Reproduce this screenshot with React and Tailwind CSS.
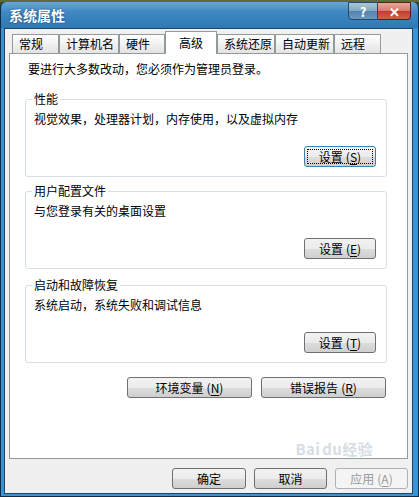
import React from "react";

const FONT = { fontFamily: '"Noto Sans CJK SC", "Noto Sans", sans-serif' };

function Btn({ children, w, focused, disabled, className = "" }) {
  return (
    <div
      className={
        "relative flex h-[21px] items-center justify-center rounded-[3px] border text-[12px] leading-none " +
        (focused
          ? "border-[#3c7fb1] bg-[linear-gradient(to_bottom,#f2f2f2_0%,#ebebeb_50%,#dddddd_51%,#cfcfcf_100%)] text-black "
          : disabled
          ? "border-[#adb2b5] bg-[#f4f4f4] text-[#9a9a9a] "
          : "border-[#707070] bg-[linear-gradient(to_bottom,#f2f2f2_0%,#ebebeb_50%,#dddddd_51%,#cfcfcf_100%)] text-black ") +
        className
      }
      style={{ width: w }}
    >
      {focused && (
        <div className="pointer-events-none absolute inset-[2px] border border-dotted border-black" />
      )}
      <span className="relative">{children}</span>
    </div>
  );
}

function Mn({ label, k }) {
  return (
    <>
      {label}
      <span className="ml-[3px]">
        (<span className="underline underline-offset-2">{k}</span>)
      </span>
    </>
  );
}

function Group({ title, text, btn, className = "" }) {
  return (
    <div
      className={
        "relative flex h-[78px] flex-col rounded-[3px] border border-[#d5dfe5] pb-[9px] " + className
      }
    >
      <div className="absolute left-[6px] top-[-9px] bg-white px-[2px] text-[12px] leading-[16px] text-black">
        {title}
      </div>
      <div className="pl-[8px] pt-[11px] text-[12px] leading-[16px] text-black">{text}</div>
      <div className="mt-auto flex justify-end pr-[10px]">{btn}</div>
    </div>
  );
}

const tabs = [
  { t: "常规", w: 47 },
  { t: "计算机名", w: 60 },
  { t: "硬件", w: 46 },
  { t: "高级", w: 52, sel: true },
  { t: "系统还原", w: 58 },
  { t: "自动更新", w: 59 },
  { t: "远程", w: 47 },
];

export default function App() {
  return (
    <div className="flex h-[497px] w-[419px] flex-col bg-[#3a4a2c]" style={FONT}>
      <div className="h-[2px] w-full bg-[#5b6b3a]" />
      <div className="flex flex-1 flex-col rounded-t-[6px] border-x border-b border-[#0f2c47] bg-[linear-gradient(to_bottom,#68a7d8_0px,#3f88c2_10px,#2e78b4_26px,#3c93d3_27px,#3c93d3_100%)] pb-[2px] pl-[3px] pr-[5px]">
        {/* Title bar */}
        <div className="relative flex h-[26px] items-center">
          <div className="pl-[5px] text-[14px] font-bold leading-none text-white [text-shadow:0_0_2px_rgba(0,30,60,0.6)]">
            系统属性
          </div>
          <div className="absolute right-[2px] top-0 flex">
            <div className="flex h-[18px] w-[30px] items-center justify-center rounded-bl-[4px] border border-[#23486a] bg-[linear-gradient(to_bottom,#a9c7de_0%,#7ea7c7_50%,#5583ab_51%,#6a98bf_100%)] text-[13px] font-bold leading-none text-white">
              ?
            </div>
            <div className="flex h-[18px] w-[33px] items-center justify-center rounded-br-[4px] border border-l-0 border-[#5a1e16] bg-[linear-gradient(to_bottom,#e8a99a_0%,#d6786a_50%,#bf3e2c_51%,#d0604c_100%)] text-[13px] font-bold leading-none text-white">
              ✕
            </div>
          </div>
        </div>

        {/* Body */}
        <div className="flex flex-1 flex-col border border-[#1e4466] bg-[#f0f0f0] px-[4px] pt-[2px]">
          {/* Tabs */}
          <div className="relative z-10 -mb-px ml-[3px] flex h-[23px] items-end">
            {tabs.map((tab) =>
              tab.sel ? (
                <div
                  key={tab.t}
                  className="flex h-[23px] items-start justify-center border border-b-0 border-[#919b9c] bg-white pt-[3px] text-[12px] leading-[16px] text-black"
                  style={{ width: tab.w }}
                >
                  {tab.t}
                </div>
              ) : (
                <div
                  key={tab.t}
                  className="mb-px flex h-[19px] items-center border border-b-0 border-[#919b9c] bg-[linear-gradient(to_bottom,#ffffff_0%,#f3f3f3_45%,#e3e3e3_100%)] pl-[6px] text-[12px] leading-[16px] text-black"
                  style={{ width: tab.w }}
                >
                  {tab.t}
                </div>
              )
            )}
          </div>

          {/* Panel */}
          <div className="relative flex h-[406px] flex-col border border-[#919b9c] bg-white pl-[15px] pr-[20px]">
            <div className="pl-[3px] pt-[7px] text-[12px] leading-[16px] text-black">
              要进行大多数改动，您必须作为管理员登录。
            </div>
            <Group
              className="mt-[22px]"
              title="性能"
              text="视觉效果，处理器计划，内存使用，以及虚拟内存"
              btn={
                <Btn w={72} focused>
                  <Mn label="设置" k="S" />
                </Btn>
              }
            />
            <Group
              className="mt-[14px]"
              title="用户配置文件"
              text="与您登录有关的桌面设置"
              btn={
                <Btn w={72}>
                  <Mn label="设置" k="E" />
                </Btn>
              }
            />
            <Group
              className="mt-[16px]"
              title="启动和故障恢复"
              text="系统启动，系统失败和调试信息"
              btn={
                <Btn w={72}>
                  <Mn label="设置" k="T" />
                </Btn>
              }
            />
            <div className="mt-[14px] flex justify-end gap-[9px] pr-px">
              <Btn w={125}>
                <Mn label="环境变量" k="N" />
              </Btn>
              <Btn w={125}>
                <Mn label="错误报告" k="R" />
              </Btn>
            </div>
            <div className="pointer-events-none absolute bottom-[2px] right-[34px] select-none text-[15px] font-bold leading-none tracking-wide text-[#d6dde4]">
              Bai<span className="ml-[2px]">du经验</span>
            </div>
          </div>

          {/* Dialog buttons */}
          <div className="mt-[9px] flex justify-end gap-[8px]">
            <Btn w={74}>确定</Btn>
            <Btn w={73}>取消</Btn>
            <Btn w={73} disabled>
              <Mn label="应用" k="A" />
            </Btn>
          </div>
        </div>
      </div>
    </div>
  );
}
